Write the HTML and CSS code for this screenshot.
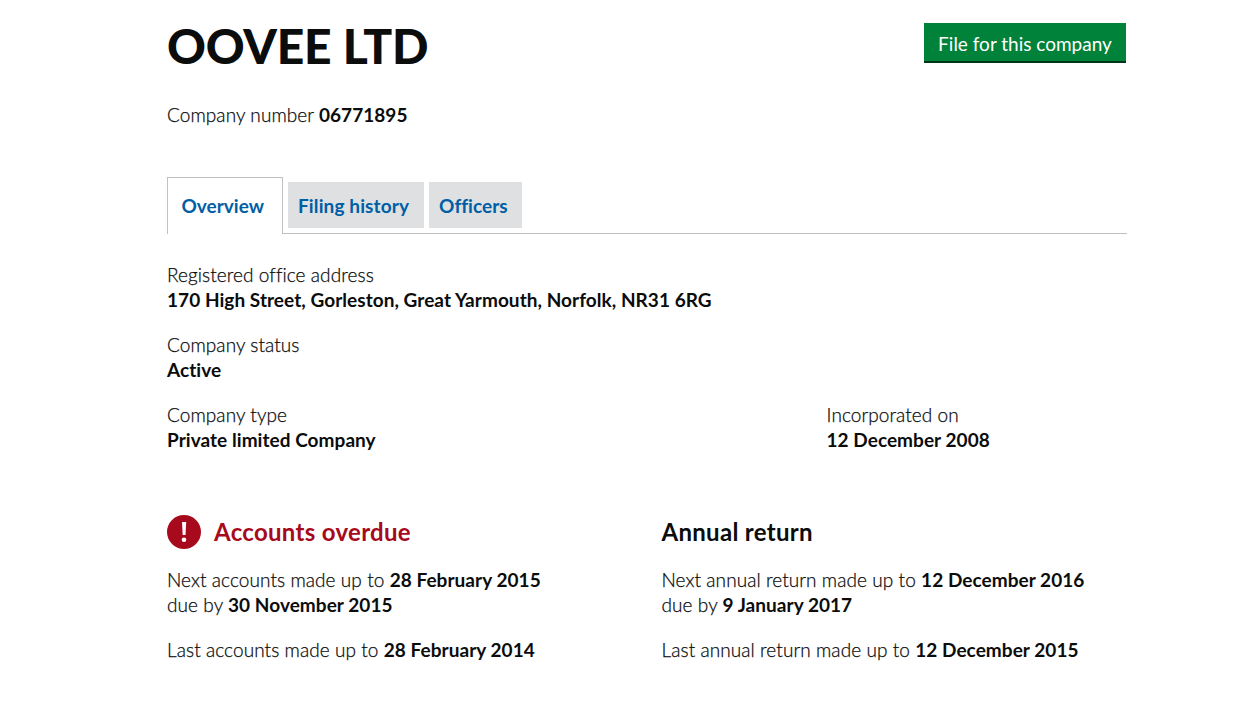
FILE: index.html
```html
<!DOCTYPE html>
<html lang="en">
<head>
<meta charset="utf-8">
<title>OOVEE LTD</title>
<link rel="stylesheet" href="styles.css">
</head>
<body>
<main class="page">
  <header class="head">
    <h1 class="title">OOVEE LTD</h1>
    <a class="file-btn" href="#">File for this company</a>
  </header>
  <p class="number">Company number <b>06771895</b></p>
  <nav class="tabs">
    <a class="tab tab-active" href="#">Overview</a>
    <a class="tab" href="#">Filing history</a>
    <a class="tab tab-officers" href="#">Officers</a>
  </nav>
  <section class="facts">
    <p class="fact">Registered office address<br><b>170 High Street, Gorleston, Great Yarmouth, Norfolk, NR31 6RG</b></p>
    <p class="fact">Company status<br><b>Active</b></p>
    <div class="fact-row">
      <p class="fact">Company type<br><b>Private limited Company</b></p>
      <p class="fact fact-inc">Incorporated on<br><b>12 December 2008</b></p>
    </div>
  </section>
  <section class="dues">
    <div class="due">
      <h2 class="due-head overdue">
        <svg class="alert" viewBox="0 0 34 34" aria-hidden="true"><circle cx="17" cy="17" r="17" fill="#a70a1c"/><path d="M15 7h4.200l-.7 13h-2.800z" fill="#fff"/><circle cx="17" cy="24.800" r="2.300" fill="#fff"/></svg>
        Accounts overdue
      </h2>
      <p class="fact">Next accounts made up to <b>28 February 2015</b><br>due by <b>30 November 2015</b></p>
      <p class="fact">Last accounts made up to <b>28 February 2014</b></p>
    </div>
    <div class="due">
      <h2 class="due-head">Annual return</h2>
      <p class="fact">Next annual return made up to <b>12 December 2016</b><br>due by <b>9 January 2017</b></p>
      <p class="fact">Last annual return made up to <b>12 December 2015</b></p>
    </div>
  </section>
</main>
</body>
</html>
```
FILE: styles.css
```css
* { box-sizing: border-box; }
body {
  margin: 0;
  background: #fff;
  color: #0b0c0c;
  font-family: Lato, "Open Sans", "Liberation Sans", sans-serif;
  font-size: 19px;
  font-weight: 300;
  font-variant-ligatures: none;
  letter-spacing: 0.08px;
  -webkit-text-stroke: 0.25px currentColor;
  line-height: 25px;
}
b { font-weight: 700; letter-spacing: 0.05px; -webkit-text-stroke: 0; }
p { margin: 0; }
.page { width: 960px; margin-left: 167px; }
.head {
  display: flex;
  justify-content: space-between;
  align-items: flex-start;
  padding-top: 23px;
}
.title {
  margin: 0;
  font-size: 48px;
  line-height: 46px;
  font-weight: 900;
  letter-spacing: -0.2px;
  -webkit-text-stroke: 0;
}
.file-btn {
  width: 202px;
  height: 40px;
  margin-right: 1px;
  background: #00823b;
  border-bottom: 2px solid #003618;
  color: #fff;
  text-align: center;
  text-decoration: none;
  font-weight: 400;
  letter-spacing: 0;
  -webkit-text-stroke: 0;
  line-height: 41px;
}
.number { margin-top: 33px; }
.tabs {
  display: flex;
  align-items: flex-end;
  gap: 5px;
  height: 57px;
  margin-top: 50px;
  border-bottom: 1px solid #bfc1c3;
}
.tab {
  height: 46px;
  margin-bottom: 5px;
  padding: 0 15px 0 10px;
  background: #dee0e2;
  color: #005ea5;
  font-weight: 700;
  letter-spacing: 0.12px;
  -webkit-text-stroke: 0;
  line-height: 47px;
  text-decoration: none;
}
.tab-officers { padding-right: 14px; letter-spacing: 0.05px; }
.tab-active {
  height: 57px;
  width: 116px;
  margin-bottom: -1px;
  padding: 0 13.500px;
  background: #fff;
  border: 1px solid #bfc1c3;
  border-bottom: 0;
  letter-spacing: 0;
  line-height: 56px;
}
.facts { margin-top: 28px; }
.fact { margin-bottom: 20px; }
.fact-row { display: flex; }
.fact-row .fact { width: 659.500px; }
.fact-row .fact-inc { width: auto; }
.dues { display: flex; margin-top: 42px; }
.due { flex: none; width: 494.500px; }
.due-head {
  display: flex;
  align-items: center;
  gap: 13px;
  height: 35px;
  margin: 0 0 18px;
  font-size: 24px;
  font-weight: 700;
  letter-spacing: 0.3px;
  -webkit-text-stroke: 0;
}
.overdue { color: #a70a1c; }
.alert { width: 34px; height: 34px; }
```
